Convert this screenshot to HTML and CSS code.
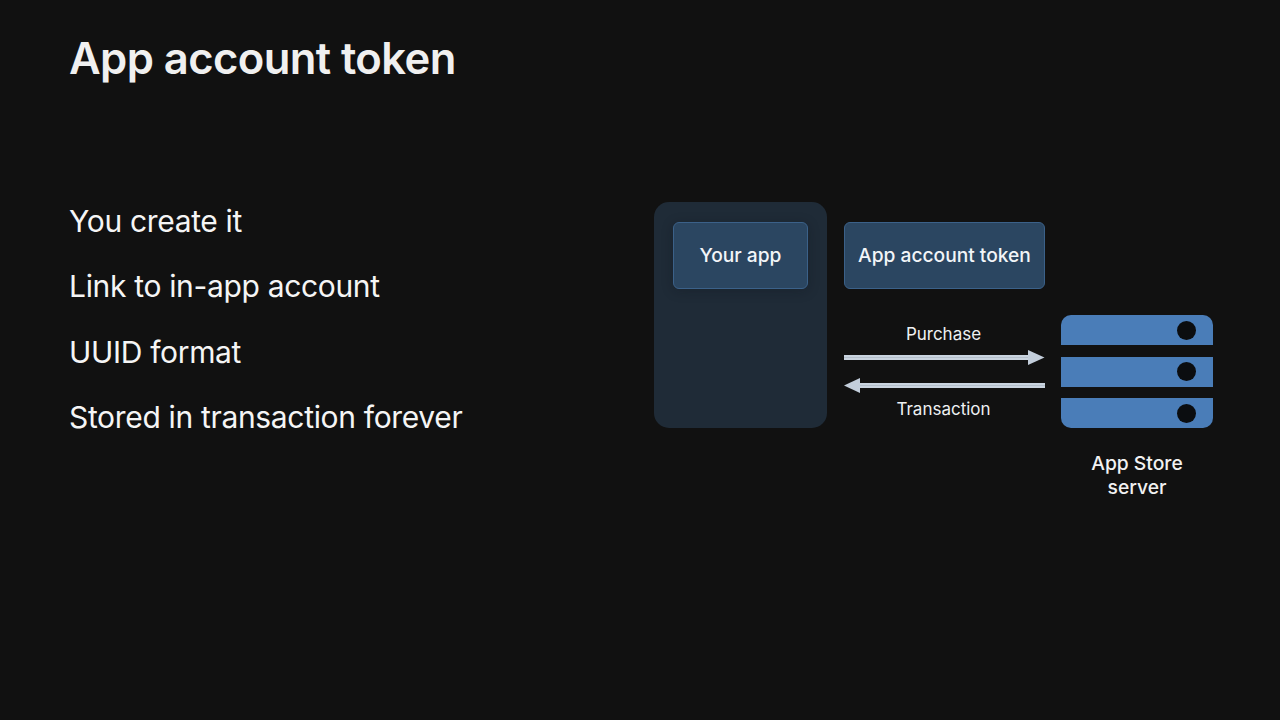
FILE: index.html
```html
<!DOCTYPE html>
<html lang="en">
<head>
<meta charset="utf-8">
<title>App account token</title>
<link rel="stylesheet" href="styles.css">
</head>
<body>
<main class="slide">
  <h1 class="title">App account token</h1>
  <div class="content">
    <ul class="points">
      <li>You create it</li>
      <li>Link to in-app account</li>
      <li>UUID format</li>
      <li>Stored in transaction forever</li>
    </ul>
    <div class="diagram">
      <div class="device">
        <div class="box box-app">Your app</div>
      </div>
      <div class="middle">
        <div class="box box-token">App account token</div>
        <div class="flows">
          <div class="flow-label flow-label-top">Purchase</div>
          <svg class="arrow arrow-right" width="201" height="17" viewBox="0 0 201 17"><rect x="0" y="6" width="186" height="5" fill="#c9d3df"/><rect x="0" y="8" width="186" height="1" fill="#b4bfcb"/><path d="M184 1 L200.5 8.5 L184 16 Z" fill="#c3cedb"/></svg>
          <svg class="arrow arrow-left" width="201" height="17" viewBox="0 0 201 17"><rect x="15" y="6" width="186" height="5" fill="#c9d3df"/><rect x="15" y="8" width="186" height="1" fill="#b4bfcb"/><path d="M16 1 L0 8.5 L16 16 Z" fill="#c3cedb"/></svg>
          <div class="flow-label flow-label-bottom">Transaction</div>
        </div>
      </div>
      <div class="server-col">
        <div class="server">
          <div class="rack rack-top"><span class="hole"></span></div>
          <div class="rack"><span class="hole"></span></div>
          <div class="rack rack-bottom"><span class="hole"></span></div>
        </div>
        <div class="server-label">App Store<br>server</div>
      </div>
    </div>
  </div>
</main>
</body>
</html>
```
FILE: styles.css
```css
* { box-sizing: border-box; }
html, body { margin: 0; height: 100%; }
body {
  background: #111111;
  font-family: Inter, "Liberation Sans", sans-serif;
  overflow: hidden;
}
.slide {
  width: 1280px;
  height: 720px;
  padding: 32px 67px 0 69px;
  background: #111111;
  color: #f2f2f2;
}
.title {
  margin: 0;
  font-size: 43.6px;
  line-height: 54px;
  font-weight: 600;
  letter-spacing: -0.6px;
  color: #f0f0f0;
}
.content {
  display: flex;
  justify-content: space-between;
  margin-top: 116px;
}
.points {
  list-style: none;
  margin: 0;
  padding: 0;
  display: flex;
  flex-direction: column;
  gap: 27px;
  font-size: 30px;
  line-height: 38.3px;
  color: #f5f5f5;
  letter-spacing: -0.33px;
}
.diagram {
  display: flex;
  align-items: flex-start;
  gap: 16px;
}
.device {
  width: 173px;
  height: 226px;
  padding: 20px 19px;
  border-radius: 15px;
  background: #1f2b37;
}
.box {
  height: 67px;
  display: flex;
  align-items: center;
  justify-content: center;
  padding-bottom: 1px;
  border: 1px solid #3b6189;
  border-radius: 6px;
  background: #2b4661;
  color: #f2f5f8;
  font-size: 19.2px;
  font-weight: 500;
}
.box-app { width: 135px; box-shadow: 0 2px 12px rgba(10, 16, 24, .25); }
.box-token { width: 201px; }
.middle {
  width: 201px;
  margin-left: 1px;
  padding-top: 20px;
}
.flows {
  display: flex;
  flex-direction: column;
  align-items: stretch;
  margin-top: 35px;
}
.arrow { display: block; }
.arrow-right { margin-top: 5px; }
.arrow-left { margin-top: 11px; }
.flow-label {
  text-align: center;
  font-size: 17px;
  line-height: 20px;
  color: #eef0f2;
  padding-right: 2px;
}
.flow-label-bottom { margin-top: 5px; }
.server-col {
  width: 152px;
  padding-top: 113px;
  text-align: center;
}
.server {
  display: flex;
  flex-direction: column;
  gap: 11.5px;
}
.rack {
  height: 30px;
  background: #4a7db8;
  display: flex;
  align-items: center;
  justify-content: flex-end;
  padding-right: 17px;
}
.rack-top { border-radius: 10px 10px 0 0; }
.rack-bottom { border-radius: 0 0 10px 10px; }
.hole {
  width: 19px;
  height: 19px;
  border-radius: 50%;
  background: #0b0d10;
}
.server-label {
  margin-top: 23px;
  font-size: 19.3px;
  line-height: 24px;
  font-weight: 500;
  color: #f2f2f2;
}
```
